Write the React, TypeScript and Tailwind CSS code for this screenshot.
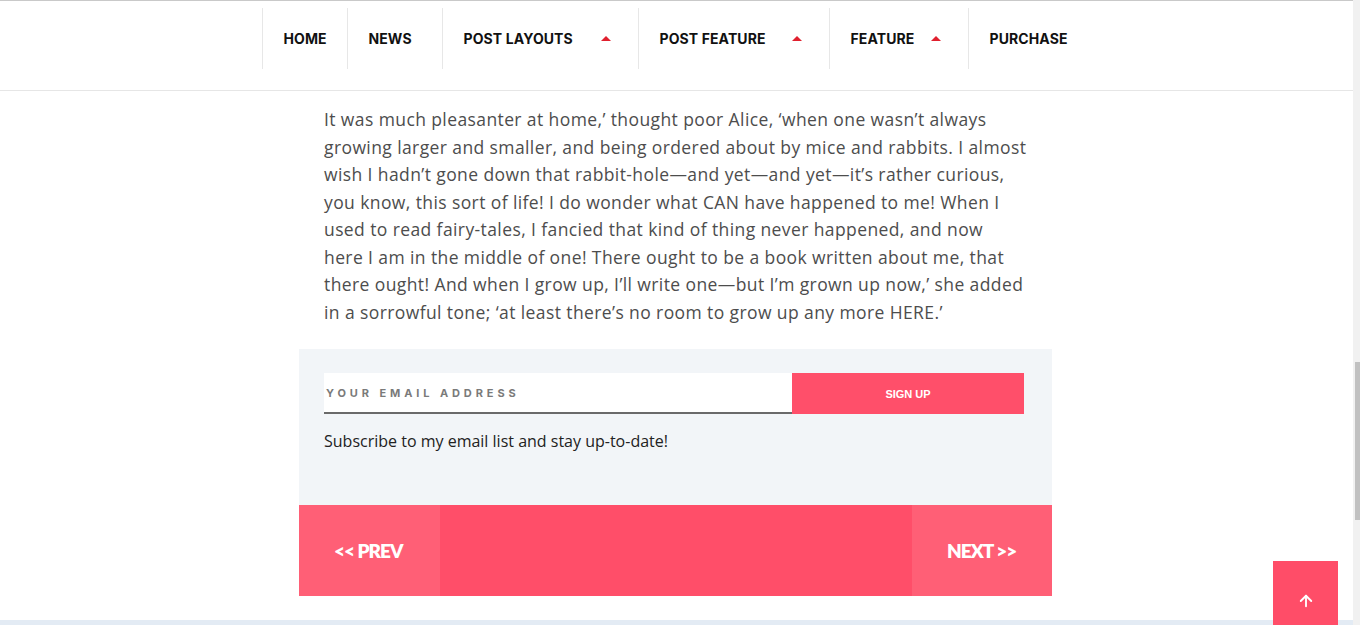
import React from "react";
import { ArrowUp } from "lucide-react";

const navItems = [
  { label: "HOME", w: "w-[85px]", caret: false },
  { label: "NEWS", w: "w-[95px]", caret: false },
  { label: "POST LAYOUTS", w: "w-[196px]", caret: true },
  { label: "POST FEATURE", w: "w-[191px]", caret: true },
  { label: "FEATURE", w: "w-[139px]", caret: true },
  { label: "PURCHASE", w: "w-[122px]", caret: false },
];

const lines = [
  "It was much pleasanter at home,’ thought poor Alice, ‘when one wasn’t always",
  "growing larger and smaller, and being ordered about by mice and rabbits. I almost",
  "wish I hadn’t gone down that rabbit-hole—and yet—and yet—it’s rather curious,",
  "you know, this sort of life! I do wonder what CAN have happened to me! When I",
  "used to read fairy-tales, I fancied that kind of thing never happened, and now",
  "here I am in the middle of one! There ought to be a book written about me, that",
  "there ought! And when I grow up, I’ll write one—but I’m grown up now,’ she added",
  "in a sorrowful tone; ‘at least there’s no room to grow up any more HERE.’",
];

export default function App() {
  return (
    <div className="relative flex h-[625px] w-full overflow-hidden bg-white">
      <div className="flex min-w-0 flex-1 flex-col">
        {/* header */}
        <header className="border-t border-b border-t-[#c9c9c9] border-b-[#e6e6e6] bg-white">
          <nav className="flex h-[89px] justify-center pr-[2px]">
            <div className="mt-[7px] flex h-[61px]">
              {navItems.map((item) => (
                <div
                  key={item.label}
                  className={`${item.w} flex items-center border-l border-[#e7e7e7] pl-[21px] pr-[27px]`}
                >
                  <span
                    className="text-[14px] font-bold tracking-[0.1px] text-[#111]"
                    style={{ fontFamily: "Inter, 'Liberation Sans', sans-serif" }}
                  >
                    {item.label}
                  </span>
                  {item.caret && (
                    <span className="ml-auto block h-0 w-0 border-x-[5px] border-b-[5px] border-x-transparent border-b-[#e0202e]" />
                  )}
                </div>
              ))}
            </div>
          </nav>
        </header>

        {/* content */}
        <div className="flex justify-center pr-[2px]">
          <main className="flex w-[753px] flex-col pt-[15px]">
            <p
              className="px-[25px] text-[17.5px] leading-[27.5px] tracking-[0.4px] whitespace-nowrap text-[#4d4d4d]"
              style={{ fontFamily: "'Open Sans', sans-serif" }}
            >
              {lines.map((l, i) => (
                <React.Fragment key={i}>
                  {l}
                  {i < lines.length - 1 && <br />}
                </React.Fragment>
              ))}
            </p>

            <section className="mt-[23px] h-[156px] bg-[#f2f5f8] pl-[25px] pr-[28px] pt-[24px]">
              <div className="flex h-[41px]">
                <div className="flex w-[468px] items-center border-b-2 border-[#6a6a6a] bg-white pl-[2px] pt-[1px]">
                  <span
                    className="text-[11px] font-bold tracking-[3.9px] text-[#7a7a7a]"
                    style={{ fontFamily: "Inter, 'Liberation Sans', sans-serif" }}
                  >
                    YOUR EMAIL ADDRESS
                  </span>
                </div>
                <button
                  className="flex flex-1 items-center justify-center bg-[#ff4f6a] pt-[1px] text-[11px] font-bold text-white"
                  style={{ fontFamily: "'Liberation Sans', Arial, sans-serif" }}
                >
                  SIGN UP
                </button>
              </div>
              <p
                className="mt-[15px] text-[16px] text-[#222]"
                style={{ fontFamily: "'Open Sans', sans-serif" }}
              >
                Subscribe to my email list and stay up-to-date!
              </p>
            </section>

            <div
              className="flex h-[91px] bg-[#ff4e69] text-[19px] font-extrabold tracking-[-1px] text-white"
              style={{ fontFamily: "Lato, 'Open Sans', sans-serif" }}
            >
              <div className="flex w-[141px] items-center bg-[#ff5f76] pl-[35px] pt-[2px]">&lt;&lt; PREV</div>
              <div className="flex-1" />
              <div className="flex w-[140px] items-center bg-[#ff5f76] pl-[35px] pt-[2px]">NEXT &gt;&gt;</div>
            </div>
          </main>
        </div>

        <div className="mt-auto h-[5px] w-full bg-[#e3ebf4]" />
      </div>

      {/* scrollbar */}
      <div className="flex w-[7px] flex-col bg-[#f1f1f1]">
        <div className="mt-[362px] h-[158px] w-[5px] self-end bg-[#c1c1c1]" />
      </div>

      {/* back to top */}
      <button className="absolute left-[1273px] top-[561px] flex h-[70px] w-[65px] justify-center bg-[#ff4d68] pt-[31px] text-white">
        <ArrowUp size={18} strokeWidth={2.5} />
      </button>
    </div>
  );
}
